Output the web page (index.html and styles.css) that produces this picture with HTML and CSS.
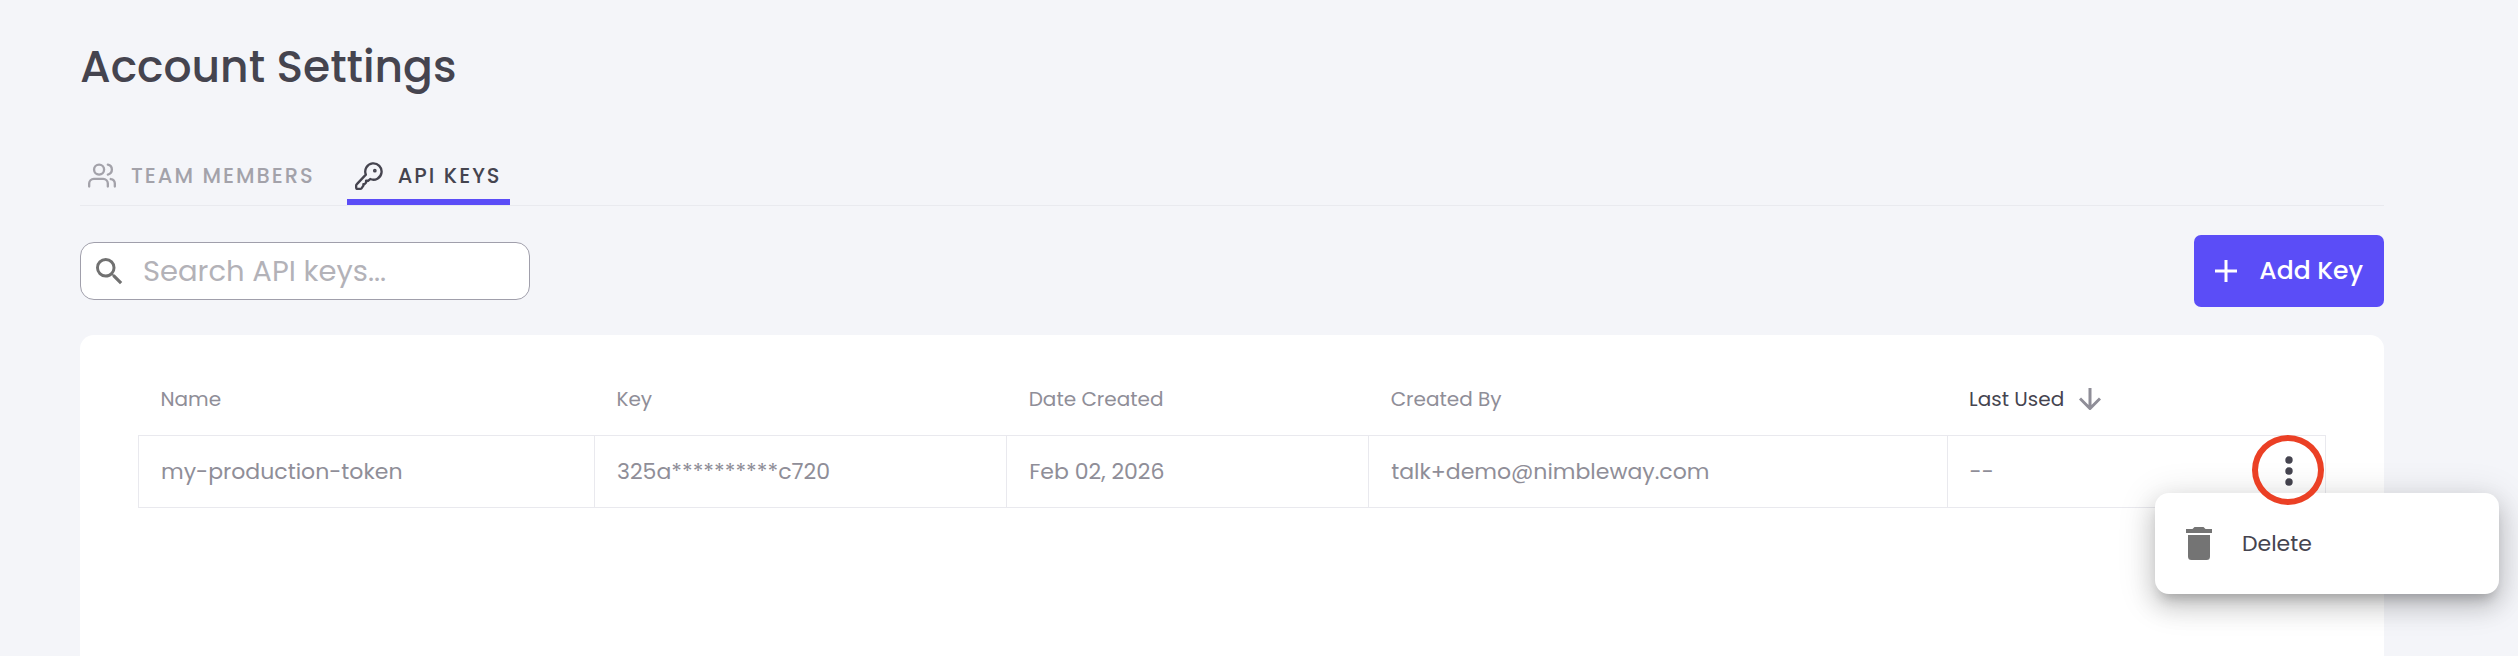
FILE: index.html
```
<!DOCTYPE html>
<html lang="en">
<head>
  <meta charset="UTF-8" />
  <meta name="viewport" content="width=device-width, initial-scale=1" />
  <title>Account Settings</title>
  <link rel="stylesheet" href="styles.css">
</head>
<body>
<main class="page">

  <h1>Account Settings</h1>

  <!-- Tabs -->
  <nav class="tabs">
    <a href="#team" class="tab">
      <svg class="tab-icon" viewBox="0 0 24 24">
        <circle cx="9.5" cy="6.5" r="4.3" />
        <path d="M17 21v-2.5a4 4 0 0 0-4-4H5a4 4 0 0 0-4 4V21M23 21v-2.5a4 4 0 0 0-3.5-3.9M17 2.2a4.4 4.4 0 0 1 0 8.6" />
      </svg>
      TEAM MEMBERS
    </a>
    <a href="#keys" class="tab active">
      <svg class="tab-icon" viewBox="0 0 24 24">
        <path d="M9.3 10.8A7 7 0 1 1 13 14.6L11.2 16.1H9.5V17.6L8.3 18.9H7.2V20.3L5.7 22.4Q5.2 23 4.4 23H2.2Q1 23 1 21.8V20.2Q1 19.5 1.6 19Z" />
        <circle class="dot" cx="17" cy="7.4" r="0.6" />
      </svg>
      API KEYS
    </a>
  </nav>

  <!-- Search + add -->
  <div class="toolbar">
    <label class="search">
      <svg class="search-icon" viewBox="3 3 18 18">
        <path d="M15.5 14h-.79l-.28-.27A6.47 6.47 0 0 0 16 9.5 6.5 6.5 0 1 0 9.5 16c1.61 0 3.09-.59 4.23-1.57l.27.28v.79l5 4.99L20.49 19l-4.99-5zm-6 0C7.01 14 5 11.99 5 9.5S7.01 5 9.5 5 14 7.01 14 9.5 11.99 14 9.5 14z" />
      </svg>
      <input type="search" placeholder="Search API keys..." aria-label="Search API keys">
    </label>
    <button class="add-btn" type="button">
      <svg class="add-icon" viewBox="0 0 22 22"><path d="M11 0v22M0 11h22" /></svg>
      Add Key
    </button>
  </div>

  <!-- Keys table -->
  <section class="card">
    <table>
      <colgroup>
        <col class="col-name">
        <col class="col-key">
        <col class="col-date">
        <col class="col-by">
        <col>
        <col class="col-actions">
      </colgroup>
      <thead>
        <tr>
          <th>Name</th>
          <th>Key</th>
          <th>Date Created</th>
          <th>Created By</th>
          <th class="sorted">
            <span class="sort">
              Last Used
              <svg class="sort-icon" viewBox="0 0 22 22"><path d="M11 0v20M1 10.5l10 10 10-10" /></svg>
            </span>
          </th>
          <th></th>
        </tr>
      </thead>
      <tbody>
        <tr>
          <td>my-production-token</td>
          <td>325a**********c720</td>
          <td>Feb 02, 2026</td>
          <td>talk+demo@nimbleway.com</td>
          <td>--</td>
          <td class="actions">
            <div class="row-menu">
              <button class="more-btn" type="button" aria-label="More actions">
                <svg viewBox="0 0 8 30">
                  <circle cx="4" cy="4" r="3.7" />
                  <circle cx="4" cy="15" r="3.7" />
                  <circle cx="4" cy="26" r="3.7" />
                </svg>
              </button>
              <div class="menu">
                <button class="menu-item" type="button">
                  <svg class="trash-icon" viewBox="0 0 26 33">
                    <path d="M0 2h6.5l2-2h9l2 2H26v4H0zM2 8h22v21.5q0 3.5-3.5 3.5h-15Q2 33 2 29.5z" />
                  </svg>
                  Delete
                </button>
              </div>
              <span class="ring"></span>
            </div>
          </td>
        </tr>
      </tbody>
    </table>
  </section>

</main>
</body>
</html>
```
FILE: styles.css
```
* {
  margin: 0; padding: 0; box-sizing: border-box;
}
body {
  font-family: Poppins, Inter, sans-serif;
  background: #f4f5f9;
  color: #45444f;
}
button, input {
  font-family: inherit;
}
button {
  border: none;
  cursor: pointer;
}
.page {
  display: flex;
  flex-direction: column;
  min-height: 100vh;
  padding: 32px 134px 0 80px;
}
h1 {
  font-size: 44px;
  font-weight: 500;
  line-height: 70px;
}

/* Tabs */
.tabs {
  display: flex;
  gap: 24px;
  margin-top: 50px;
  border-bottom: 1px solid #e9eaef;
}
.tab {
  display: flex;
  align-items: center;
  gap: 15px;
  height: 53px;
  padding: 0 8px;
  border-bottom: 6px solid transparent;
  color: #a3a2aa;
  font-size: 21px;
  font-weight: 500;
  letter-spacing: 2px;
  text-decoration: none;
  white-space: nowrap;
}
.tab.active {
  color: #45444f;
  border-bottom-color: #5b4df7;
}
.tab-icon {
  width: 28px;
  height: 28px;
  fill: none;
  stroke: currentColor;
  stroke-width: 2;
  stroke-linecap: round;
  stroke-linejoin: round;
}
.tab-icon .dot {
  fill: currentColor;
}

/* Toolbar */
.toolbar {
  display: flex;
  justify-content: space-between;
  align-items: center;
  margin-top: 29px;
}
.search {
  display: flex;
  align-items: center;
  gap: 20px;
  width: 450px;
  height: 58px;
  padding: 0 15px;
  background: #fff;
  border: 1px solid #a09fab;
  border-radius: 14px;
}
.search-icon {
  width: 27px;
  height: 27px;
  flex: none;
  fill: #717171;
}
.search input {
  flex: 1;
  min-width: 0;
  border: none;
  outline: none;
  background: none;
  color: #45444f;
  font-size: 29px;
}
.search input::placeholder {
  color: #b3b2b8;
}
.add-btn {
  display: flex;
  align-items: center;
  justify-content: center;
  gap: 22px;
  height: 72px;
  padding: 0 21px;
  border-radius: 7px;
  background: #5b4df7;
  color: #fff;
  font-size: 25px;
  font-weight: 500;
}
.add-icon {
  width: 22px;
  height: 22px;
  stroke: #fff;
  stroke-width: 3;
}

/* Table */
.card {
  flex: 1;
  margin-top: 28px;
  padding: 28px 58px;
  background: #fff;
  border-radius: 14px 14px 0 0;
}
table {
  width: 100%;
  table-layout: fixed;
  border-collapse: collapse;
}
.col-name { width: 20.85%; }
.col-key { width: 18.85%; }
.col-date { width: 16.55%; }
.col-by { width: 26.45%; }
.col-actions { width: 72px; }
th {
  height: 72px;
  padding: 0 22px;
  color: #8f8e98;
  font-size: 20px;
  font-weight: 400;
  text-align: left;
}
th.sorted {
  color: #45444f;
}
.sort {
  display: flex;
  align-items: center;
  gap: 15px;
}
.sort-icon {
  width: 22px;
  height: 22px;
  fill: none;
  stroke: #8f8e98;
  stroke-width: 3;
}
td {
  height: 72px;
  padding: 0 22px;
  border: 1px solid #e9e9ee;
  color: #8f8e98;
  font-size: 22px;
}
td:nth-last-child(2) {
  border-right: none;
}
td.actions {
  padding: 0;
  border-left: none;
}

/* Row menu */
.row-menu {
  position: relative;
  display: flex;
  justify-content: center;
}
.more-btn {
  width: 40px;
  height: 40px;
  background: none;
}
.more-btn svg {
  display: block;
  height: 30px;
  margin: auto;
  fill: #45444f;
}
.menu {
  position: absolute;
  top: 42px;
  right: -174px;
  width: 344px;
  padding: 14px 0;
  background: #fff;
  border-radius: 14px;
  box-shadow: 0 10px 12px -6px rgba(0, 0, 0, 0.2), 0 12px 24px 2px rgba(0, 0, 0, 0.14), 0 6px 36px 4px rgba(0, 0, 0, 0.12);
}
.menu-item {
  display: flex;
  align-items: center;
  gap: 30px;
  width: 100%;
  height: 73px;
  padding: 0 31px;
  background: none;
  color: #45444f;
  font-size: 22px;
}
.trash-icon {
  width: 26px;
  height: 33px;
  fill: #747474;
}
.ring {
  position: absolute;
  top: -16px;
  left: -2px;
  width: 72px;
  height: 70px;
  border: 6px solid #eb4025;
  border-radius: 50%;
  pointer-events: none;
}
```
